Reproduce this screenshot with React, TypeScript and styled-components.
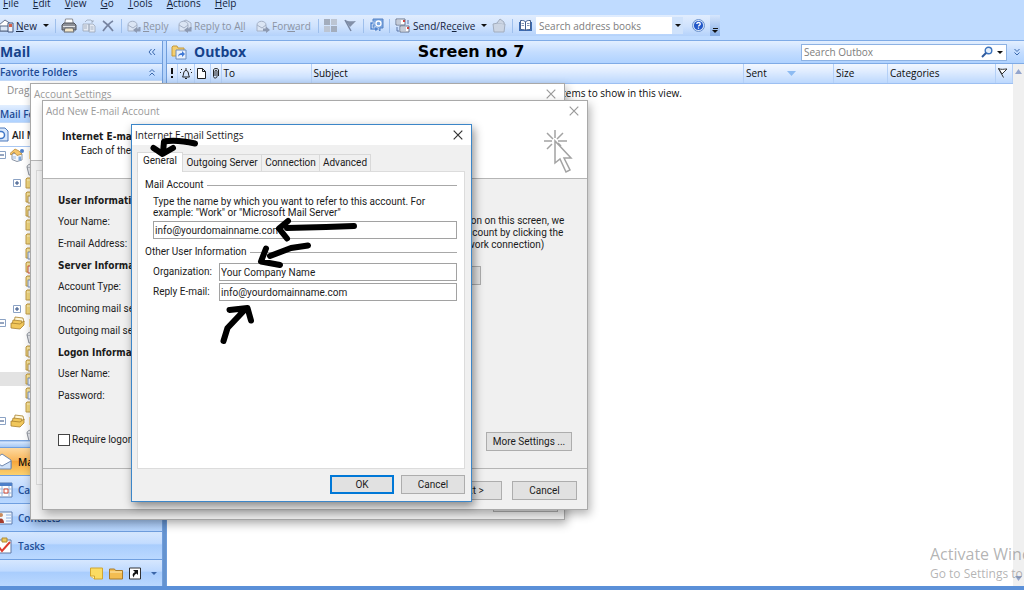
import React from "react";
import styled, { createGlobalStyle, css } from "styled-components";

const ui = `"Open Sans", "Noto Sans", sans-serif`;
const dlg = `Roboto, "Noto Sans", sans-serif`;
const strongFace = `"DejaVu Sans Condensed", "DejaVu Sans", sans-serif`;

const GlobalStyle = createGlobalStyle`
  * { box-sizing: border-box; }
  body { margin: 0; font: 10px/14px ${ui}; color: #1b1b1b; background: #bfdbff; }
  button, input { font: inherit; color: inherit; margin: 0; padding: 0; }
  button { background: none; border: 0; }
  h1, h2, h3, p { margin: 0; font-size: inherit; }
  svg { display: block; flex: none; }
`;

const Desktop = styled.div`
  position: relative;
  min-height: 100vh;
  overflow: hidden;
  display: flex;
  flex-direction: column;
  border-bottom: 4px solid #5b90d8;
`;

/* menu bar and toolbar */

const MenuBar = styled.nav`
  height: 15px;
  display: flex;
  align-items: flex-start;
  gap: 14px;
  padding-left: 3px;
  overflow: hidden;
`;
const MenuItem = styled.button`
  height: 14px;
  margin-top: -4px;
  color: #15233c;
`;

const ToolStrip = styled.div`
  display: flex;
  height: 21px;
  width: 720px;
  max-width: 100%;
  background: linear-gradient(#e1edfe, #cfe2fd 55%, #b4d2fb);
`;
const Tool = styled.button<{ $w: number; $off?: boolean }>`
  width: ${(p) => p.$w}px;
  flex: none;
  display: flex;
  align-items: center;
  gap: 2px;
  white-space: nowrap;
  color: ${(p) => (p.$off ? "#8b93a2" : "#15233c")};
`;
const Divider = styled.i`
  flex: none;
  width: 1px;
  height: 14px;
  margin: 4px 5px 0 0;
  background: #9ebfec;
`;
const Caret = styled.i<{ $push?: boolean; $color?: string }>`
  flex: none;
  margin-left: ${(p) => (p.$push ? 4 : 0)}px;
  border: 3px solid transparent;
  border-top-color: ${(p) => p.$color || "#111"};
  border-bottom-width: 0;
`;
const AddressSearch = styled.div`
  display: flex;
  width: 148px;
  height: 17px;
  margin: 2px 9px 0 0;
  background: #fff;
`;
const AddressInput = styled.input`
  flex: 1;
  min-width: 0;
  border: 0;
  padding-left: 3px;
  background: none;
  &::placeholder { color: #7d7d7d; opacity: 1; }
`;
const DropButton = styled.button`
  width: 11px;
  display: flex;
  align-items: center;
  justify-content: center;
  background: #cfe2fb;
`;
const Overflow = styled.button`
  width: 10px;
  display: flex;
  flex-direction: column;
  align-items: center;
  justify-content: flex-end;
  gap: 1px;
  padding-bottom: 3px;
  background: linear-gradient(#d6e6fd, #86aee6);
  &::before { content: ""; width: 5px; height: 1px; background: #111; }
`;

/* work area */

const Work = styled.div`
  flex: 1;
  display: flex;
  margin-top: 4px;
  border-top: 1px solid #7fabe6;
`;
const Side = styled.aside`
  width: 163px;
  flex: none;
  display: flex;
  flex-direction: column;
  background: #fff;
  overflow: hidden;
  border-right: 1px solid #6f9ddb;
`;
const Splitter = styled.div`
  width: 4px;
  flex: none;
  background: linear-gradient(#bfdbff, #8fb6ea 120px, #6593cf 360px);
  border-right: 1px solid #6f9ddb;
`;
const bar = css`
  display: flex;
  align-items: center;
  justify-content: space-between;
  background: linear-gradient(#e3efff, #c4ddff 50%, #afd2ff);
  border-bottom: 1px solid #7fabe6;
`;
const SideTitle = styled.h1`
  ${bar}
  height: 23px;
  padding: 0 6px 0 0;
  font: 700 14px/18px ${ui};
  color: #15428b;
`;
const SideBar = styled.h2<{ $h: number }>`
  ${bar}
  height: ${(p) => p.$h}px;
  padding-right: 6px;
  font: 600 10px/14px ${ui};
  color: #1c4a94;
  border-bottom-color: #c4daf8;
  white-space: nowrap;
`;
const Hint = styled.p`
  height: 24px;
  padding: 2px 0 0 7px;
  color: #8a8a8a;
  white-space: nowrap;
`;
const AllMail = styled.div`
  height: 24px;
  display: flex;
  align-items: center;
  gap: 3px;
  font: 600 10px/14px ${ui};
  border-bottom: 1px solid #a9c8f3;
  white-space: nowrap;
`;
const Tree = styled.ul`
  flex: 1 0 283px;
  margin: 0;
  padding: 1px 0 0;
  list-style: none;
  overflow: hidden;
`;
const Node = styled.li<{ $depth: number; $sel?: boolean }>`
  height: 14px;
  display: flex;
  align-items: center;
  gap: 4px;
  padding-left: ${(p) => (p.$depth ? 13 : 0)}px;
  margin-left: ${(p) => (p.$depth ? 0 : -2)}px;
  background: ${(p) => (p.$sel ? "#e3e3e3" : "none")};
  font: 600 10px/14px ${ui};
`;
const Toggle = styled.span<{ $blank?: boolean }>`
  width: 8px;
  flex: none;
  visibility: ${(p) => (p.$blank ? "hidden" : "visible")};
`;
const Grip = styled.div`
  height: 7px;
  background: linear-gradient(#5b8fd6, #d5e6fd 30%, #a5c8f5);
`;
const NavButton = styled.button<{ $on?: boolean }>`
  height: 28px;
  display: flex;
  align-items: center;
  gap: 5px;
  text-align: left;
  font: 600 10px/14px ${ui};
  color: ${(p) => (p.$on ? "#111" : "#1f4e96")};
  border-top: 1px solid #6f9fe0;
  background: ${(p) =>
    p.$on
      ? "linear-gradient(#fdd9a0, #f9b75c 45%, #f7a63c 50%, #fbd16f)"
      : "linear-gradient(#d6e7fe, #c3dcff 42%, #a9cdfd 48%, #bad8ff)"};
`;
const NavFoot = styled.div`
  height: 27px;
  display: flex;
  align-items: center;
  justify-content: flex-end;
  gap: 6px;
  padding-right: 5px;
  border-top: 1px solid #6f9fe0;
  background: linear-gradient(#d6e7fe, #bfdaff 42%, #a9cdfd 48%, #bad8ff);
`;
const IconButton = styled.button`
  display: flex;
`;

const Main = styled.main`
  flex: 1;
  min-width: 0;
  display: flex;
  flex-direction: column;
  background: #fff;
`;
const FolderBar = styled.header`
  ${bar}
  height: 23px;
  padding: 0 3px 0 4px;
  justify-content: flex-start;
`;
const FolderName = styled.h2`
  flex: 7;
  margin-left: 7px;
  font: 700 14px/18px ${ui};
  color: #15428b;
`;
const ScreenTag = styled.strong`
  flex: 12;
  font: bold 16px/20px "DejaVu Sans", sans-serif;
  color: #000;
`;
const SearchBox = styled.div`
  width: 206px;
  height: 17px;
  display: flex;
  align-items: center;
  gap: 4px;
  padding-right: 3px;
  margin-right: 6px;
  background: #fff;
  border: 1px solid #8db2e3;
`;
const SearchInput = styled(AddressInput)`
  padding-left: 2px;
`;
const ListWrap = styled.div`
  flex: 1;
  display: flex;
`;
const Messages = styled.table`
  flex: 1;
  table-layout: fixed;
  border-collapse: collapse;
  align-self: flex-start;
  width: 100%;
`;
const Col = styled.th<{ $w?: number }>`
  width: ${(p) => (p.$w ? p.$w + "px" : "auto")};
  height: 19px;
  padding: 0 0 0 2px;
  text-align: left;
  vertical-align: middle;
  font: 10px/14px ${ui};
  color: #0c0c0c;
  background: linear-gradient(#f2f7ff, #dceaff 45%, #bcd8fe);
  border-bottom: 1px solid #9dc0f2;
  border-right: 1px solid #b4d0f7;
`;
const SortCol = styled.span`
  display: flex;
  align-items: center;
  gap: 20px;
`;
const Empty = styled.td`
  padding-top: 2px;
  text-align: center;
  color: #0c0c0c;
`;
const Scroll = styled.div`
  width: 11px;
  flex: none;
  display: flex;
  flex-direction: column;
  justify-content: space-between;
  align-items: center;
  padding: 5px 0;
  background: #f0f0f0;
`;

/* dialogs */

const Dialog = styled.section<{ $x: number; $y: number; $w: number; $active?: boolean }>`
  position: absolute;
  left: ${(p) => p.$x}px;
  top: ${(p) => p.$y}px;
  width: ${(p) => p.$w}px;
  background: #f0f0f0;
  font-family: ${dlg};
  border: 1px solid ${(p) => (p.$active ? "#3c86c8" : "#a9a9a9")};
  box-shadow: 2px 4px 9px rgba(0, 0, 0, ${(p) => (p.$active ? 0.45 : 0.3)});
`;
const Caption = styled.header<{ $active?: boolean }>`
  height: 20px;
  display: flex;
  align-items: center;
  justify-content: space-between;
  padding: 0 8px 0 3px;
  background: #fff;
  font: 10px/18px ${ui};
  color: ${(p) => (p.$active ? "#1b1b1b" : "#9a9a9a")};
`;
const SettingsHead = styled.div`
  height: 57px;
  background: #fff;
  border-bottom: 1px solid #b5b5b5;
`;
const SettingsPane = styled.div`
  height: 315px;
  margin: 9px 5px 4px;
  border: 1px solid #d9d9d9;
  background: #f4f4f4;
`;
const FootRow = styled.footer`
  display: flex;
  justify-content: flex-end;
  padding: 4px 6px 7px;
`;
const Button = styled.button<{ $w: number; $default?: boolean }>`
  width: ${(p) => p.$w}px;
  height: 19px;
  background: #e1e1e1;
  border: ${(p) => (p.$default ? "2px solid #0078d7" : "1px solid #adadad")};
`;
const WizardHead = styled.div`
  display: flex;
  justify-content: space-between;
  height: 58px;
  padding: 9px 12px 0 19px;
  background: #fff;
  border-bottom: 1px solid #b5b5b5;
`;
const HeadTitle = styled.h3`
  font: bold 10px/14px ${strongFace};
`;
const HeadText = styled.p`
  padding-left: 19px;
`;
const WizardBody = styled.div`
  display: flex;
  align-items: stretch;
  height: 290px;
  padding: 11px 15px 0;
  border-bottom: 1px solid #b5b5b5;
`;
const FormColumn = styled.div`
  width: 288px;
  flex: none;
  white-space: nowrap;
`;
const Heading = styled.h3`
  font: bold 10px/21px ${strongFace};
`;
const Field = styled.div`
  line-height: 22px;
  height: 22px;
`;
const CheckLabel = styled.label`
  display: flex;
  align-items: center;
  gap: 2px;
  margin-top: 26px;
`;
const Check = styled.input`
  appearance: none;
  width: 12px;
  height: 12px;
  background: #fff;
  border: 1px solid #444;
`;
const TestColumn = styled.div`
  flex: 1;
  min-width: 0;
  display: flex;
  flex-direction: column;
  align-items: flex-start;
  line-height: 12px;
  padding: 25px 0 17px;
  white-space: nowrap;
  button { line-height: 14px; }
`;
const TestButton = styled(Button)`
  margin-top: 15px;
`;
const MoreButton = styled(Button)`
  margin: auto 0 0 auto;
`;
const WizardFoot = styled.footer`
  display: flex;
  justify-content: flex-end;
  gap: 10px;
  padding: 12px 10px 9px;
`;
const Tabs = styled.div`
  display: flex;
  align-items: flex-end;
  height: 26px;
  padding: 0 5px;
`;
const Tab = styled.button<{ $w: number; $on?: boolean }>`
  position: relative;
  width: ${(p) => p.$w}px;
  height: ${(p) => (p.$on ? 20 : 17)}px;
  margin-bottom: ${(p) => (p.$on ? -1 : 0)}px;
  padding-bottom: ${(p) => (p.$on ? 3 : 0)}px;
  background: ${(p) => (p.$on ? "#fff" : "#f0f0f0")};
  border: solid #d9d9d9;
  border-width: ${(p) => (p.$on ? "1px 1px 0 1px" : "1px 1px 0 0")};
  white-space: nowrap;
`;
const TabPage = styled.div`
  height: 298px;
  margin: 0 6px 0 5px;
  padding: 6px 7px;
  background: #fff;
  border: 1px solid #dcdcdc;
`;
const Group = styled.fieldset`
  margin: 0;
  padding: 0;
  border: 0;
`;
const Legend = styled.legend`
  display: flex;
  align-items: center;
  gap: 3px;
  width: 100%;
  padding: 0;
  &::after { content: ""; flex: 1; height: 1px; background: #a8a8a8; }
`;
const Note = styled.label`
  display: block;
  padding: 4px 0 3px 8px;
  line-height: 11px;
`;
const TextBox = styled.input`
  flex: 1;
  min-width: 0;
  height: 18px;
  padding: 0 1px;
  background: #fff;
  border: 1px solid #a2a2a2;
`;
const FormRow = styled.div`
  display: flex;
  align-items: center;
  padding-left: 8px;
  margin-bottom: 2px;
`;
const FormLabel = styled.label`
  width: 66px;
`;
const AccountRow = styled(FormRow)`
  margin-bottom: 6px;
`;
const OtherRows = styled.div`
  padding-top: 4px;
`;
const DialogFoot = styled.footer`
  display: flex;
  justify-content: flex-end;
  gap: 7px;
  padding: 6px 6px 7px;
`;

const Watermark = styled.div`
  position: absolute;
  right: 0;
  bottom: 3px;
  width: 94px;
  overflow: hidden;
  white-space: nowrap;
  color: rgba(130, 130, 130, 0.6);
  font: 12px/18px ${ui};
`;
const WatermarkTitle = styled.div`
  font-size: 16px;
  line-height: 22px;
`;
const Strokes = styled.svg`
  position: absolute;
  left: 131px;
  top: 124px;
  pointer-events: none;
`;

/* icons */

const Close = ({ color }: { color: string }) => (
  <svg width="10" height="10" viewBox="0 0 10 10"><path d="M.7.7l8.6 8.6M9.3.7L.7 9.3" stroke={color} strokeWidth="1.2" /></svg>
);
const Chevrons = ({ d }: { d: string }) => (
  <svg width="8" height="8" viewBox="0 0 8 8" fill="none" stroke="#3a68ad" strokeWidth="1"><path d={d} /></svg>
);
const NewMail = () => (
  <svg width="14" height="14" viewBox="0 0 14 14">
    <path d="M-1 6l6-5 6 4v7H-1z" fill="#fff" stroke="#66718a" />
    <path d="M0 7h12v5H0z" fill="#dce8f8" stroke="#556684" />
    <path d="M8 4h5v9H8z" fill="#eef4fd" stroke="#41557c" /><rect x="9" y="5" width="3" height="3" fill="#d5604a" />
  </svg>
);
const Printer = () => (
  <svg width="16" height="16" viewBox="0 0 16 16">
    <path d="M4.500 1h7l1 6h-9z" fill="#fff" stroke="#8a8d94" />
    <path d="M1 7l2-2h10l2 2v5H1z" fill="#8d9097" stroke="#50535a" /><path d="M2 8.500h12" stroke="#e1e3e7" />
    <path d="M4 10h8l1 4H3z" fill="#f3e6c8" stroke="#63666d" />
  </svg>
);
const MoveTo = () => (
  <svg width="14" height="14" viewBox="0 0 14 14" fill="#e4eaf4" stroke="#9ba6b8" strokeWidth=".8">
    <path d="M1 5h6v7H1zM7 5h4l2 2v6H7z" /><path d="M8.500 8h3M8.500 10h3M2 7h3M2 9h3M3 3l2-2h4l2 2M9 3h2V1" fill="none" />
  </svg>
);
const Delete = () => (
  <svg width="12" height="12" viewBox="0 0 12 12"><path d="M1 1c3 2 7 6 10 10M11 1C7 3 4 7 1 11" fill="none" stroke="#7683a0" strokeWidth="1.7" /></svg>
);
const Envelope = ({ all, flip }: { all?: boolean; flip?: boolean }) => (
  <svg width="14" height="14" viewBox="0 0 14 14" fill="#dbe5f4" stroke="#a5b1c6">
    {all && <path d="M4 3l4-2 5 3v6H4z" />}
    <path d="M1 6c0-5 9-5 9 0v6H1z" /><path d="M1 6l5 3 4-3" fill="none" />
    <path d={flip ? "M7 9.500h3v-2l4 3.500-4 3v-2H7z" : "M13.500 8v4.500H10V14l-4-3 4-3v1.500h1.500V8z"} fill="#8d9ab2" stroke="none" />
  </svg>
);
const Grid4 = () => (
  <svg width="13" height="13" viewBox="0 0 13 13"><path d="M0 0h6v6H0zM7 7h6v6H7z" fill="#a3adbd" /><path d="M7 0h6v6H7zM0 7h6v6H0z" fill="#bcc5d3" /></svg>
);
const Flag = () => (
  <svg width="13" height="13" viewBox="0 0 13 13"><path d="M1 1c4 2 7 1 11 1L9 5l-3 3z" fill="#8390a8" /><path d="M1 1l6 11" stroke="#7886a0" strokeWidth="1.5" /></svg>
);
const Find = () => (
  <svg width="15" height="15" viewBox="0 0 15 15">
    <path d="M4 1h10v9h-3v3l-3-3H4z" fill="#7ba6e0" stroke="#5683c4" />
    <circle cx="9.500" cy="5.500" r="2.500" fill="none" stroke="#fff" strokeWidth="1.300" />
    <path d="M1 4h4v2H3v4h3V8l4 3-4 3v-2H1z" fill="#4f83cf" stroke="#e6f0fd" strokeWidth=".6" />
  </svg>
);
const SendReceive = () => (
  <svg width="16" height="16" viewBox="0 0 16 16">
    <path d="M1 1h9v6H1zM5 8h9v6H5z" fill="#fff" stroke="#69758c" />
    <path d="M2 3h4M2 5h4M6 10h5M6 12h5" stroke="#8b99b3" /><path d="M8 2h2v2H8zM12 9h2v2h-2z" fill="#c44" />
    <path d="M13 2v4M2 9v4h2" stroke="#5c77a8" fill="none" />
  </svg>
);
const Bag = () => (
  <svg width="14" height="15" viewBox="0 0 14 15" fill="#ccd5e3" stroke="#a2adbe"><path d="M1 6l5-1 7 1-1 8H2z" /><path d="M5 5l3-4 4 3v2" /></svg>
);
const Book = () => (
  <svg width="15" height="14" viewBox="0 0 15 14">
    <path d="M1 3h13v9H1z" fill="#3c6cb4" /><path d="M2.500 1.500c3 0 4 0 5 1.500v8.500c-1-1-2-1-5-1zM12.500 1.500c-3 0-4 0-5 1.500v8.500c1-1 2-1 5-1z" fill="#fff" stroke="#45608f" />
    <path d="M3.500 4.500H6M3.500 6.500H6M9 4.500h2.500M9 6.500h2.500" stroke="#8394b3" />
  </svg>
);
const Help = () => (
  <svg width="13" height="13" viewBox="0 0 13 13">
    <circle cx="6.500" cy="6.500" r="6" fill="#d5e4fa" stroke="#6d93cd" /><circle cx="6.500" cy="6.500" r="4.600" fill="#2458c8" />
    <path d="M4.800 5c0-2 3.500-2 3.500 0 0 1.300-1.800 1.200-1.800 2.500M6.500 8.600v1.200" stroke="#fff" strokeWidth="1.300" fill="none" />
  </svg>
);
const Outbox = () => (
  <svg width="16" height="15" viewBox="0 0 16 15">
    <path d="M1 2l1-1h4l1 2h6v8H1z" fill="#f5cf6f" stroke="#c59a3c" />
    <path d="M5 5h10v9H5z" fill="#e8f1fd" stroke="#6c8cbc" /><path d="M7 12c0-3 2-4 4-4V6l3 3-3 3v-2c-2 0-3 0-4 2z" fill="#3f79d6" />
  </svg>
);
const Magnifier = () => (
  <svg width="12" height="12" viewBox="0 0 12 12" fill="none"><circle cx="7.500" cy="4.500" r="3.300" fill="#e6f0fc" stroke="#3c73bd" strokeWidth="1.400" /><path d="M5 7l-4 4" stroke="#2f5a9c" strokeWidth="2" /></svg>
);
const ToggleBox = ({ plus }: { plus?: boolean }) => (
  <svg width="8" height="8" viewBox="0 0 8 8"><path d="M.5.5h7v7h-7z" fill="#fff" stroke="#8ba2c4" /><path d={plus ? "M2 4h4M4 2v4" : "M2 4h4"} stroke="#2b4b80" /></svg>
);
const Folder = ({ badge }: { badge?: string }) => (
  <svg width="13" height="13" viewBox="0 0 13 13">
    <path d="M1 2l1-1h4l1 1h5v9H1z" fill="#f3d981" stroke="#c09b48" /><path d="M2 3h4" stroke="#fff3c5" />
    {badge && <path d="M3 5h8v7H3z" fill="#f6f9ff" stroke={badge} />}
  </svg>
);
const Trash = () => (
  <svg width="13" height="13" viewBox="0 0 13 13" fill="#e8ebef" stroke="#8c929c"><path d="M2 4h9l-1 8H4z" /><path d="M2 4c0-4 9-4 9 0" /></svg>
);
const Home = () => (
  <svg width="15" height="14" viewBox="0 0 15 14">
    <path d="M2 6l4-1 6 1v6l-5 1.500-5-2z" fill="#f4f7fb" stroke="#8b95a5" /><path d="M0 5.500L5 1l4 2 3 3-5 1.500L4 4 1 7z" fill="#f5c56a" stroke="#b98a3a" strokeWidth=".8" />
    <path d="M8.500 8.500H11v4H8.500z" fill="#7aa6dd" /><circle cx="12" cy="3" r="2" fill="#4f7fc6" /><path d="M3 8h3v3H3z" fill="#c8d8ee" />
  </svg>
);
const Stack = () => (
  <svg width="15" height="14" viewBox="0 0 15 14" fill="#f1c75b" stroke="#a9812f" strokeWidth=".8">
    <path d="M5 1l8 1 1 4-3 2H4z" fill="#fff6d6" /><path d="M3 4l9 1-1 4H2z" /><path d="M1 7l9 1 4-3v4l-4 4-9-1z" />
  </svg>
);
const AllItems = () => (
  <svg width="9" height="15" viewBox="5 0 9 15"><path d="M0 1h10l3 3v10H0z" fill="#d8e8fc" stroke="#4d79bb" /><circle cx="6" cy="8" r="3.500" fill="#fff" stroke="#3f77c7" strokeWidth="1.500" /></svg>
);
const NavMail = () => (
  <svg width="13" height="17" viewBox="0 0 13 17"><path d="M-6 7l8-6 9 6v8H-6z" fill="#fff" stroke="#6f87ad" /><path d="M-6 8l8 5 9-5v8H-6z" fill="#cfe1f8" stroke="#6f87ad" /></svg>
);
const NavCalendar = () => (
  <svg width="13" height="17" viewBox="0 0 13 17">
    <path d="M-2 2h14v14H-2z" fill="#fff" stroke="#5c7cae" /><path d="M-2 2h14v3H-2z" fill="#4d7fc9" />
    <path d="M0 8h12M0 12h12M2 5v10M9 5v10" stroke="#9fb7da" /><path d="M4 8h4v4H4z" fill="#fff" stroke="#d04b36" />
  </svg>
);
const NavContacts = () => (
  <svg width="13" height="14" viewBox="0 0 13 14">
    <path d="M-3 1h15v12H-3z" fill="#f3f8ff" stroke="#5c7cae" /><circle cx="1" cy="4" r="2" fill="#c98b5e" /><path d="M-2 12c0-6 6-6 6 0z" fill="#a43c2e" />
    <path d="M6 4h5M6 7h5M6 10h5" stroke="#8fb0e0" />
  </svg>
);
const NavTasks = () => (
  <svg width="13" height="17" viewBox="0 0 13 17">
    <path d="M-2 3h13v13H-2z" fill="#fff" stroke="#6079a3" /><path d="M2 1h5v4H2z" fill="#f0c95b" stroke="#ae8a34" />
    <path d="M-1 10l3 4 8-9" fill="none" stroke="#dd3b2e" strokeWidth="2" />
  </svg>
);
const ClickMark = () => (
  <svg width="32" height="46" viewBox="0 0 32 46" fill="none" stroke="#a3a3a3" strokeWidth="1.500">
    <path d="M12 -1v9M1 11h8M15 11h9M4 3l6 6M20 3l-6 6M4 19l5-5M15 13l3 3" />
    <path d="M12 11v22l5-4 6 13 4-2-6-12h7z" fill="#fff" />
  </svg>
);

const tree: { d: number; t?: "+" | "-"; icon: React.ReactNode; label?: string; sel?: boolean }[] = [
  { d: 0, t: "-", icon: <Home />, label: "Personal Folders" },
  { d: 1, icon: <Trash /> },
  { d: 1, t: "+", icon: <Folder /> },
  { d: 1, icon: <Folder badge="#b99a55" /> },
  { d: 1, icon: <Folder badge="#b99a55" /> },
  { d: 1, icon: <Folder /> },
  { d: 1, icon: <Folder /> },
  { d: 1, icon: <Folder badge="#7c97c4" /> },
  { d: 1, icon: <Folder badge="#d1573c" /> },
  { d: 1, icon: <Folder badge="#7c97c4" /> },
  { d: 1, icon: <Folder /> },
  { d: 1, t: "+", icon: <Folder /> },
  { d: 0, t: "-", icon: <Stack />, label: "Personal Folders" },
  { d: 1, icon: <Trash /> },
  { d: 1, icon: <Folder badge="#b99a55" /> },
  { d: 1, icon: <Folder badge="#b99a55" /> },
  { d: 1, icon: <Folder badge="#7c97c4" />, sel: true },
  { d: 1, icon: <Folder badge="#7c97c4" /> },
  { d: 1, icon: <Folder /> },
  { d: 0, t: "-", icon: <Stack />, label: "Personal Folders" },
  { d: 1, icon: <Trash /> },
];

const menus = ["File", "Edit", "View", "Go", "Tools", "Actions", "Help"];

function Toolbar() {
  return (
    <ToolStrip role="toolbar" aria-label="Standard">
      <Tool $w={55}><NewMail /><span><u>N</u>ew</span><Caret $push /></Tool>
      <Divider />
      <Tool $w={21} aria-label="Print"><Printer /></Tool>
      <Tool $w={20} aria-label="Move to folder"><MoveTo /></Tool>
      <Tool $w={19} aria-label="Delete"><Delete /></Tool>
      <Divider />
      <Tool $w={51} $off><Envelope /><span><u>R</u>eply</span></Tool>
      <Tool $w={78} $off><Envelope all /><span>Reply to A<u>l</u>l</span></Tool>
      <Tool $w={62} $off><Envelope flip /><span>For<u>w</u>ard</span></Tool>
      <Divider />
      <Tool $w={20} aria-label="Categorize"><Grid4 /></Tool>
      <Tool $w={19} aria-label="Follow up"><Flag /></Tool>
      <Divider />
      <Tool $w={20} aria-label="Find"><Find /></Tool>
      <Divider />
      <Tool $w={97}><SendReceive /><span>Send/Re<u>c</u>eive</span><Caret $push /></Tool>
      <Tool $w={20} aria-label="Send"><Bag /></Tool>
      <Divider />
      <Tool $w={18} aria-label="Address book"><Book /></Tool>
      <AddressSearch>
        <AddressInput aria-label="Search address books" placeholder="Search address books" />
        <DropButton aria-label="Recent searches"><Caret /></DropButton>
      </AddressSearch>
      <Tool $w={18} aria-label="Help"><Help /></Tool>
      <Overflow aria-label="Toolbar options"><Caret /></Overflow>
    </ToolStrip>
  );
}

function Sidebar() {
  return (
    <Side>
      <SideTitle>Mail<Chevrons d="M3.500 1L1 4l2.500 3M7 1L4.500 4 7 7" /></SideTitle>
      <SideBar $h={17}>Favorite Folders<Chevrons d="M1.500 4L4 1.500 6.500 4M1.500 7.500L4 5l2.500 2.500" /></SideBar>
      <Hint>Drag Favorite Folders Here</Hint>
      <SideBar $h={18}>Mail Folders</SideBar>
      <AllMail><AllItems />All Mail Items</AllMail>
      <Tree>
        {tree.map((n, i) => (
          <Node key={i} $depth={n.d} $sel={n.sel}>
            <Toggle $blank={!n.t}><ToggleBox plus={n.t === "+"} /></Toggle>
            {n.icon}
            {n.label}
          </Node>
        ))}
      </Tree>
      <Grip />
      <NavButton $on><NavMail />Mail</NavButton>
      <NavButton><NavCalendar />Calendar</NavButton>
      <NavButton><NavContacts />Contacts</NavButton>
      <NavButton><NavTasks />Tasks</NavButton>
      <NavFoot>
        <IconButton aria-label="Notes"><svg width="13" height="13" viewBox="0 0 13 13"><path d="M.5 1h12v11h-8l-4-3z" fill="#fbdc62" stroke="#d0a531" /><path d="M.5 9h4v3" fill="#fff2b0" stroke="#d0a531" /></svg></IconButton>
        <IconButton aria-label="Folder list"><svg width="14" height="13" viewBox="0 0 14 13"><path d="M.5 2h5l1 1.500h7V12H.5z" fill="#f3bd52" stroke="#a97b2a" /><path d="M1 5h12" stroke="#ffe9b0" /></svg></IconButton>
        <IconButton aria-label="Shortcuts"><svg width="12" height="13" viewBox="0 0 12 13"><path d="M.5 1h11v11H.5z" fill="#fff" stroke="#333" /><path d="M4 3h5v5L7.500 6.500C5 8 5 9 5 10.500 2.500 8 4 6 6 5z" fill="#111" /></svg></IconButton>
        <Caret $push $color="#3b66a8" />
      </NavFoot>
    </Side>
  );
}

function MessageList() {
  return (
    <Main>
      <FolderBar>
        <Outbox />
        <FolderName>Outbox</FolderName>
        <ScreenTag>Screen no 7</ScreenTag>
        <SearchBox>
          <SearchInput aria-label="Search Outbox" placeholder="Search Outbox" />
          <Magnifier />
          <Caret />
        </SearchBox>
        <Chevrons d="M1.500 1L4 3.500 6.500 1M1.500 4.500L4 7l2.500-2.500" />
      </FolderBar>
      <ListWrap>
        <Messages>
          <thead>
            <tr>
              <Col $w={10} aria-label="Importance"><svg width="6" height="10" viewBox="0 0 6 10"><path d="M3 0v6M3 8v2" stroke="#111" strokeWidth="2" /></svg></Col>
              <Col $w={17} aria-label="Reminder"><svg width="12" height="11" viewBox="0 0 12 11"><path d="M2.500 9C4 7 3 2.500 6 2.500S8 7 9.500 9zM5 10.500h2M1 5L0 4M11 5l1-1M2 2L1 1M10 2l1-1M6 2V0" fill="none" stroke="#222" /></svg></Col>
              <Col $w={16} aria-label="Type"><svg width="9" height="11" viewBox="0 0 9 11"><path d="M.5.5h5l3 3v7h-8zM5.500.5v3h3" fill="#fff" stroke="#222" /></svg></Col>
              <Col $w={11} aria-label="Attachment"><svg width="6" height="11" viewBox="0 0 6 11"><path d="M2 8V3c0-1 2-1 2 0v5.500c0 2-3.500 2-3.500 0V2C.5 0 5.500 0 5.500 2v6" fill="none" stroke="#222" /></svg></Col>
              <Col $w={90}>To</Col>
              <Col>Subject</Col>
              <Col $w={90}><SortCol>Sent<svg width="9" height="5" viewBox="0 0 9 5"><path d="M0 0h9L4.500 5z" fill="#8dbbf2" /></svg></SortCol></Col>
              <Col $w={54}>Size</Col>
              <Col $w={108}>Categories</Col>
              <Col $w={17} aria-label="Flag status"><svg width="10" height="10" viewBox="0 0 10 10"><path d="M.5.5c3 1.500 5 .5 8.500.5L7 3 4 6zM.5.5l5 9" fill="#fff" stroke="#333" /></svg></Col>
            </tr>
          </thead>
          <tbody>
            <tr><Empty colSpan={10}>There are no items to show in this view.</Empty></tr>
          </tbody>
        </Messages>
        <Scroll>
          <svg width="7" height="5" viewBox="0 0 7 5"><path d="M0 5h7L3.500 0z" fill="#93a5cd" /></svg>
          <svg width="7" height="5" viewBox="0 0 7 5"><path d="M0 0h7L3.500 5z" fill="#93a5cd" /></svg>
        </Scroll>
      </ListWrap>
    </Main>
  );
}

function AccountSettings() {
  return (
    <Dialog $x={30} $y={83} $w={535}>
      <Caption>Account Settings<Close color="#9a9a9a" /></Caption>
      <SettingsHead />
      <SettingsPane />
      <FootRow><Button $w={65} aria-label="Close" /></FootRow>
    </Dialog>
  );
}

function AddAccount() {
  return (
    <Dialog $x={42} $y={100} $w={546}>
      <Caption>Add New E-mail Account<Close color="#9a9a9a" /></Caption>
      <WizardHead>
        <div>
          <HeadTitle>Internet E-mail Settings</HeadTitle>
          <HeadText>Each of these settings are required to get your e-mail account working.</HeadText>
        </div>
        <ClickMark />
      </WizardHead>
      <WizardBody>
        <FormColumn>
          <Heading>User Information</Heading>
          <Field>Your Name:</Field>
          <Field>E-mail Address:</Field>
          <Heading>Server Information</Heading>
          <Field>Account Type:</Field>
          <Field>Incoming mail server:</Field>
          <Field>Outgoing mail server (SMTP):</Field>
          <Heading>Logon Information</Heading>
          <Field>User Name:</Field>
          <Field>Password:</Field>
          <CheckLabel><Check type="checkbox" />Require logon using Secure Password</CheckLabel>
        </FormColumn>
        <TestColumn>
          <p>After filling out the information on this screen, we<br />recommend you test your account by clicking the<br />button below. (Requires network connection)</p>
          <TestButton $w={135}>Test Account Settings ...</TestButton>
          <MoreButton $w={86}>More Settings ...</MoreButton>
        </TestColumn>
      </WizardBody>
      <WizardFoot>
        <Button $w={65}>Next &gt;</Button>
        <Button $w={65}>Cancel</Button>
      </WizardFoot>
    </Dialog>
  );
}

function InternetSettings() {
  return (
    <Dialog $x={131} $y={124} $w={341} $active role="dialog" aria-label="Internet E-mail Settings">
      <Caption $active>Internet E-mail Settings<Close color="#333" /></Caption>
      <Tabs role="tablist">
        <Tab $w={46} $on role="tab" aria-selected>General</Tab>
        <Tab $w={79} role="tab">Outgoing Server</Tab>
        <Tab $w={58} role="tab">Connection</Tab>
        <Tab $w={51} role="tab">Advanced</Tab>
      </Tabs>
      <TabPage role="tabpanel">
        <Group>
          <Legend>Mail Account</Legend>
          <Note htmlFor="account">Type the name by which you want to refer to this account. For<br />example: "Work" or "Microsoft Mail Server"</Note>
          <AccountRow><TextBox id="account" defaultValue="info@yourdomainname.com" /></AccountRow>
        </Group>
        <Group>
          <Legend>Other User Information</Legend>
          <OtherRows>
            <FormRow><FormLabel htmlFor="org">Organization:</FormLabel><TextBox id="org" defaultValue="Your Company Name" /></FormRow>
            <FormRow><FormLabel htmlFor="reply">Reply E-mail:</FormLabel><TextBox id="reply" defaultValue="info@yourdomainname.com" /></FormRow>
          </OtherRows>
        </Group>
      </TabPage>
      <DialogFoot>
        <Button $w={64} $default>OK</Button>
        <Button $w={64}>Cancel</Button>
      </DialogFoot>
    </Dialog>
  );
}

export default function App() {
  return (
    <Desktop>
      <GlobalStyle />
      <MenuBar>
        {menus.map((m) => (
          <MenuItem key={m}><u>{m[0]}</u>{m.slice(1)}</MenuItem>
        ))}
      </MenuBar>
      <Toolbar />
      <Work>
        <Sidebar />
        <Splitter />
        <MessageList />
      </Work>
      <AccountSettings />
      <AddAccount />
      <InternetSettings />
      <Strokes width="240" height="225" viewBox="131 124 240 225" fill="none" stroke="#000" strokeWidth="6" strokeLinecap="round" strokeLinejoin="round">
        <path d="M195 143.500C184 141 172 140 164 141.500L163 153M153.500 148l9 6 10.500-6" />
        <path d="M354 226l-28 1-39 1M288 221l-9 7.500 8 10" />
        <path d="M308 245.500l-17 2.500-21 8M266 248.500l-5 13 19 3.500" />
        <path d="M223.500 341l4-13 18-19M229.500 310l18-2 3.500 12.500" />
      </Strokes>
      <Watermark>
        <WatermarkTitle>Activate Windows</WatermarkTitle>
        Go to Settings to activate Windows.
      </Watermark>
    </Desktop>
  );
}
